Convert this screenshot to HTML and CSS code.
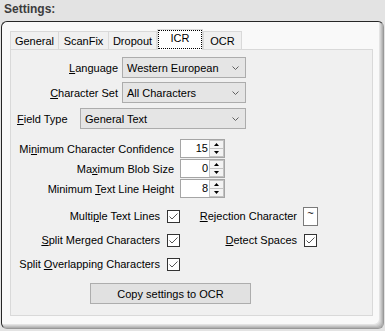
FILE: index.html
```html
<!DOCTYPE html>
<html lang="en">
<head>
    <meta charset="UTF-8">
    <meta name="viewport" content="width=device-width, initial-scale=1.0">
    <title>Settings</title>
    <link rel="stylesheet" href="styles.css">
</head>
<body>
    <div class="title">Settings:</div>
    <div class="frame">
        <div class="tabs">
            <div class="tab tab-general">General</div>
            <div class="tab tab-scanfix">ScanFix</div>
            <div class="tab tab-dropout">Dropout</div>
            <div class="tab tab-icr active">ICR</div>
            <div class="tab tab-ocr">OCR</div>
        </div>
        <div class="panel">
            <div class="field">
                <span class="field-label"><u>L</u>anguage</span>
                <div class="combo combo-short">
                    <span>Western European</span>
                    <svg width="7" height="4" viewBox="0 0 7 4"><polyline points="0.5,0.5 3.5,3.5 6.5,0.5" fill="none" stroke="#606060"/></svg>
                </div>
            </div>
            <div class="field">
                <span class="field-label"><u>C</u>haracter Set</span>
                <div class="combo combo-short">
                    <span>All Characters</span>
                    <svg width="7" height="4" viewBox="0 0 7 4"><polyline points="0.5,0.5 3.5,3.5 6.5,0.5" fill="none" stroke="#606060"/></svg>
                </div>
            </div>
            <div class="field field-last">
                <span class="field-label field-label-short"><u>F</u>ield Type</span>
                <div class="combo combo-long">
                    <span>General Text</span>
                    <svg width="7" height="4" viewBox="0 0 7 4"><polyline points="0.5,0.5 3.5,3.5 6.5,0.5" fill="none" stroke="#606060"/></svg>
                </div>
            </div>

            <div class="spins">
                <div class="spin-row">
                    <span class="spin-label">Mi<u>n</u>imum Character Confidence</span>
                    <div class="spin">
                        <span class="spin-value">15</span>
                        <div class="spin-buttons">
                            <div class="spin-btn"><svg width="5" height="3" viewBox="0 0 5 3"><polygon points="0,3 5,3 2.5,0" fill="#000"/></svg></div>
                            <div class="spin-btn spin-down"><svg width="5" height="3" viewBox="0 0 5 3"><polygon points="0,0 5,0 2.5,3" fill="#000"/></svg></div>
                        </div>
                    </div>
                </div>
                <div class="spin-row">
                    <span class="spin-label">Ma<u>x</u>imum Blob Size</span>
                    <div class="spin">
                        <span class="spin-value">0</span>
                        <div class="spin-buttons">
                            <div class="spin-btn"><svg width="5" height="3" viewBox="0 0 5 3"><polygon points="0,3 5,3 2.5,0" fill="#000"/></svg></div>
                            <div class="spin-btn spin-down"><svg width="5" height="3" viewBox="0 0 5 3"><polygon points="0,0 5,0 2.5,3" fill="#000"/></svg></div>
                        </div>
                    </div>
                </div>
                <div class="spin-row">
                    <span class="spin-label">Minimum <u>T</u>ext Line Height</span>
                    <div class="spin">
                        <span class="spin-value">8</span>
                        <div class="spin-buttons">
                            <div class="spin-btn"><svg width="5" height="3" viewBox="0 0 5 3"><polygon points="0,3 5,3 2.5,0" fill="#000"/></svg></div>
                            <div class="spin-btn spin-down"><svg width="5" height="3" viewBox="0 0 5 3"><polygon points="0,0 5,0 2.5,3" fill="#000"/></svg></div>
                        </div>
                    </div>
                </div>
            </div>

            <div class="checks">
                <span class="check-label">Multi<u>p</u>le Text Lines</span>
                <div class="checkbox"><svg width="11" height="11" viewBox="0 0 11 11"><polyline points="1.5,5.5 4,8 9.5,2.5" fill="none" stroke="#555"/></svg></div>
                <span class="check-label"><u>R</u>ejection Character</span>
                <div class="char-box">~</div>

                <span class="check-label"><u>S</u>plit Merged Characters</span>
                <div class="checkbox"><svg width="11" height="11" viewBox="0 0 11 11"><polyline points="1.5,5.5 4,8 9.5,2.5" fill="none" stroke="#555"/></svg></div>
                <span class="check-label"><u>D</u>etect Spaces</span>
                <div class="checkbox checkbox-right"><svg width="11" height="11" viewBox="0 0 11 11"><polyline points="1.5,5.5 4,8 9.5,2.5" fill="none" stroke="#555"/></svg></div>

                <span class="check-label">Split <u>O</u>verlapping Characters</span>
                <div class="checkbox"><svg width="11" height="11" viewBox="0 0 11 11"><polyline points="1.5,5.5 4,8 9.5,2.5" fill="none" stroke="#555"/></svg></div>
            </div>

            <button class="copy-btn">Copy settings to OCR</button>
        </div>
    </div>
</body>
</html>
```

FILE: styles.css
```css
* {
    box-sizing: border-box;
}
body {
    margin: 0;
    background-color: #e3e3e3;
    font-family: "Liberation Sans", Arial, sans-serif;
    font-size: 11px;
    color: #000;
}
.title {
    height: 21px;
    padding: 2px 0 0 4px;
    font-size: 12px;
    font-weight: bold;
    line-height: 14px;
    color: #3c3c3c;
}
.frame {
    width: 383px;
    height: 308px;
    margin-left: 1px;
    padding: 7px 10px 0 8px;
    background: #f9f9f9;
    border: 1px solid;
    border-color: #262626 #999 #999 #262626;
    border-radius: 6px;
    box-shadow: inset -1px -1px 0 #b0b0b0, inset -2px -2px 0 #c2c2c2, inset -3px -3px 0 #d3d3d3, inset -4px -4px 0 #e3e3e3;
}

/* tab strip */
.tabs {
    display: flex;
    align-items: flex-end;
    height: 20px;
}
.tab {
    height: 18px;
    padding-top: 2px;
    line-height: 15px;
    text-align: center;
    background: #f0f0f0;
    border: 1px solid #d9d9d9;
    border-bottom: 0;
}
.tab + .tab {
    margin-left: -1px;
}
.tab-general { width: 49px; }
.tab-scanfix { width: 51px; }
.tab-dropout { width: 49px; }
.tab-icr { width: 46px; }
.tab-ocr { width: 39px; }
.tab.active,
.tab.active + .tab {
    margin-left: 0;
}
.tab.active {
    height: 21px;
    margin-bottom: -1px;
    padding-top: 1px;
    background: #fff;
    position: relative;
    z-index: 1;
}
.tab.active::after {
    content: "";
    position: absolute;
    left: 0;
    top: 0;
    right: 0;
    bottom: 1px;
    border: 1px dotted #000;
}

.panel {
    width: 363px;
    height: 267px;
    padding: 7px 0 0 6px;
    background: #f0f0f0;
    border: 1px solid #d9d9d9;
}

/* combo rows */
.field {
    display: flex;
    align-items: center;
    height: 21px;
}
.field + .field {
    margin-top: 4px;
}
.field.field-last {
    margin-top: 5px;
}
.field-label {
    width: 101px;
    margin-right: 4px;
    text-align: right;
}
.field-label-short {
    width: 59px;
    text-align: left;
}
.combo {
    display: flex;
    align-items: center;
    justify-content: space-between;
    height: 21px;
    padding: 0 6px 0 4px;
    background: #e5e5e5;
    border: 1px solid #acacac;
}
.combo-short { width: 124px; }
.combo-long { width: 166px; }

/* numeric spinners */
.spins {
    margin-top: 10px;
}
.spin-row {
    display: flex;
    align-items: center;
    height: 19px;
}
.spin-row + .spin-row {
    margin-top: 1px;
}
.spin-label {
    width: 157px;
    margin-right: 6px;
    text-align: right;
}
.spin {
    display: flex;
    width: 45px;
    height: 19px;
    background: #fff;
    border: 1px solid #a5a5a5;
}
.spin-value {
    flex: 1;
    padding-right: 1px;
    line-height: 17px;
    text-align: right;
}
.spin-buttons {
    display: flex;
    flex-direction: column;
    width: 15px;
}
.spin-btn {
    display: flex;
    align-items: center;
    justify-content: center;
    height: 9px;
    background: #f3f3f3;
    border: 1px solid #c2c2c2;
}
.spin-btn.spin-down {
    height: 8px;
    border-top: 0;
}
.spin-btn svg {
    display: block;
}

/* check boxes */
.checks {
    display: grid;
    grid-template-columns: 143px 20px 117px 22px;
    grid-auto-rows: 24px;
    align-items: center;
    margin-top: 6px;
}
.check-label {
    text-align: right;
}
.checkbox {
    justify-self: end;
    width: 13px;
    height: 13px;
    background: #fff;
    border: 1px solid #333;
}
.checkbox svg {
    display: block;
}
.checkbox.checkbox-right {
    justify-self: start;
    margin-left: 7px;
}
.char-box {
    width: 15px;
    height: 19px;
    margin-left: 6px;
    line-height: 11px;
    text-align: center;
    background: #fff;
    border: 1px solid #7a7a7a;
}

.copy-btn {
    display: block;
    width: 161px;
    height: 21px;
    margin: 7px 0 0 73px;
    padding: 0;
    font: inherit;
    color: #000;
    background: #e1e1e1;
    border: 1px solid #adadad;
}
```
